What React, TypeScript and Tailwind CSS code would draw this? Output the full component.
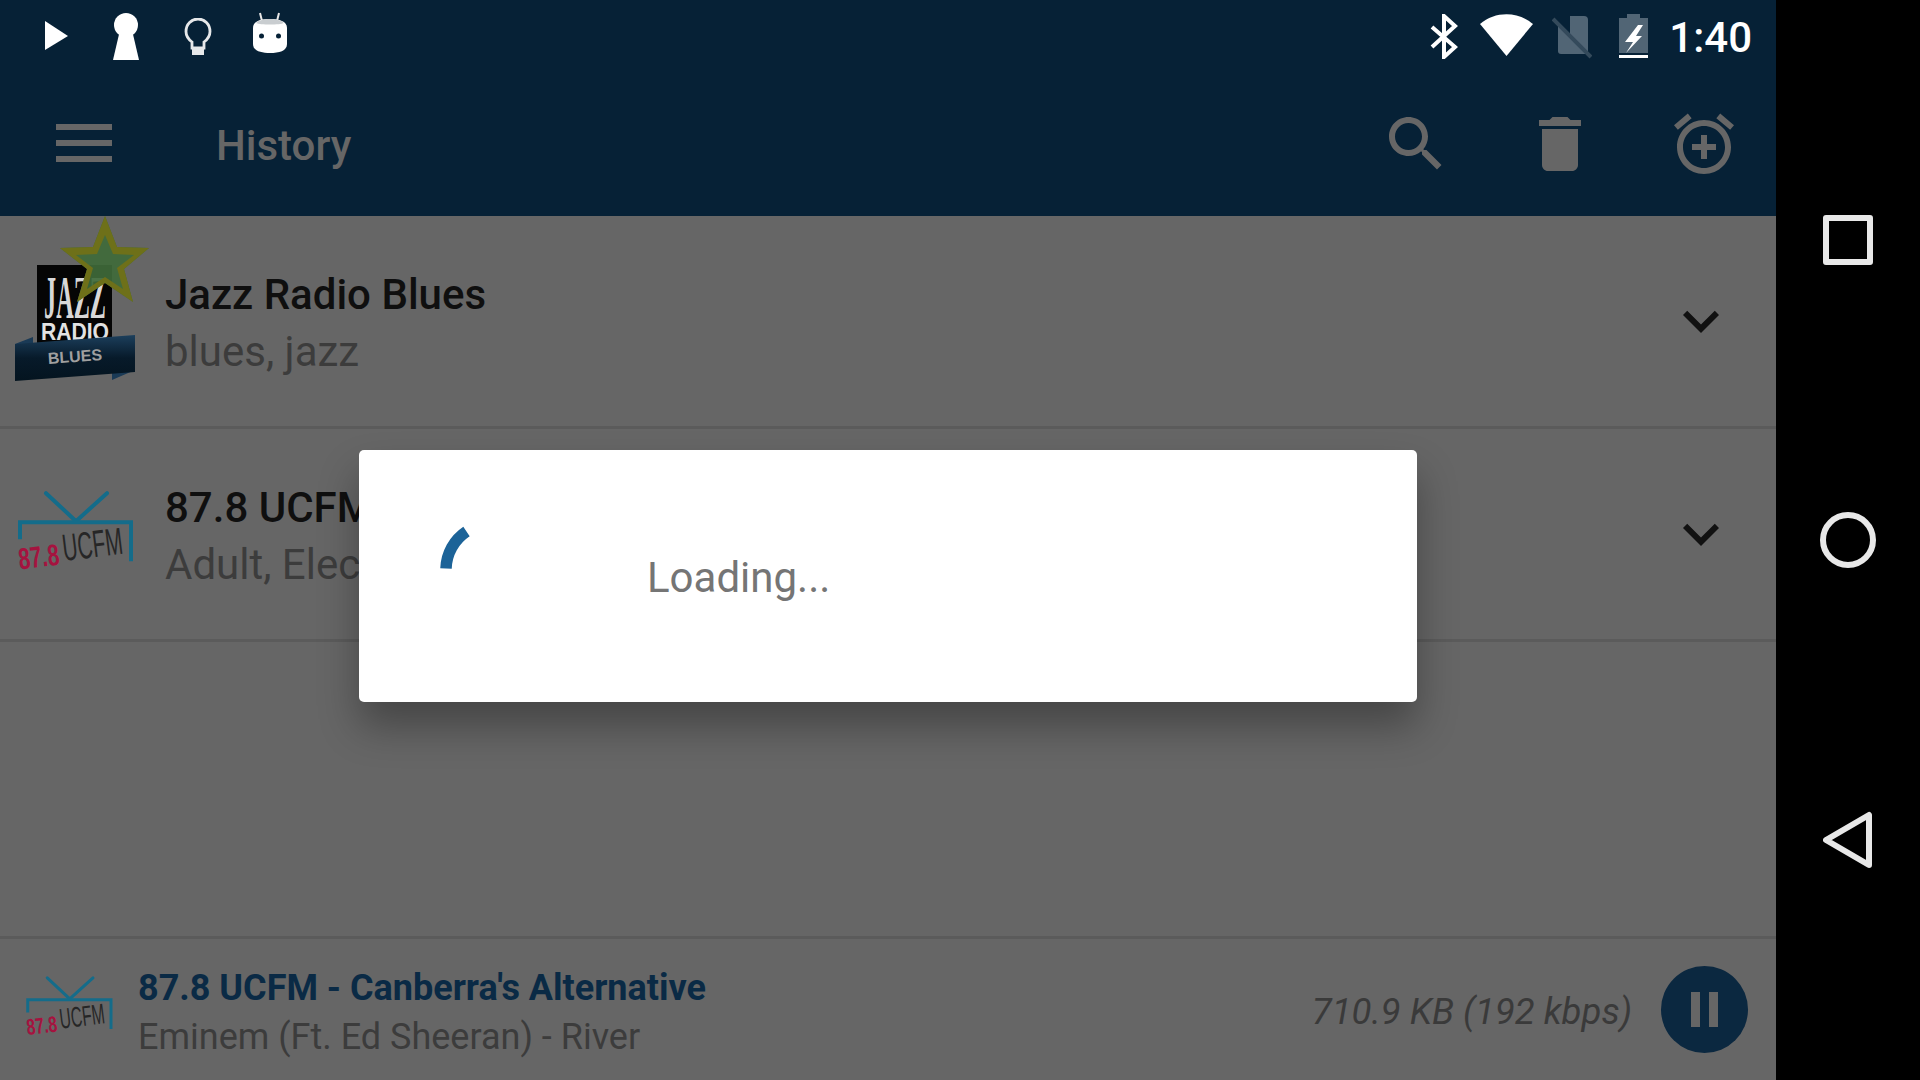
const ROBOTO = "font-['Roboto',sans-serif]";

function JazzLogo() {
  return (
    <svg width="136" height="170" viewBox="14 216 136 170" className="shrink-0">
      <defs>
        <linearGradient id="rib" x1="0" y1="0" x2="0" y2="1">
          <stop offset="0" stopColor="#1c3f5c" />
          <stop offset="0.5" stopColor="#071a2a" />
          <stop offset="1" stopColor="#04141f" />
        </linearGradient>
      </defs>
      <rect x="37" y="265" width="75" height="82" fill="#050505" />
      <text transform="translate(75 318) scale(0.39 1)" fontFamily="Liberation Serif" fontSize="62" fontWeight="700" fill="#d8d8d8" textAnchor="middle">JAZZ</text>
      <text transform="translate(75 340) scale(0.92 1)" fontFamily="Liberation Sans" fontSize="23" fontWeight="700" fill="#e2e2e2" textAnchor="middle">RADIO</text>
      <polygon points="15,344 33,337 33,350" fill="#1a3a56" />
      <polygon points="112,372 135,370 135,370 112,380" fill="#1a3a56" />
      <polygon points="15,344 135,335 135,372 15,381" fill="url(#rib)" />
      <text x="75" y="362" fontFamily="Liberation Sans" fontSize="16" fontWeight="700" fill="#a0a0a0" textAnchor="middle" transform="rotate(-4 75 358)">BLUES</text>
      <polygon points="105,216 117,247 149,248 124,269 133,302 105,283 77,302 87,269 60,248 93,247" fill="#3f6a3a" fillOpacity="0.92" />
      <path d="M105 216 117 247 149 248 124 269 133 302 105 283 77 302 87 269 60 248 93 247ZM105 235 97 254 76 255 93 268 87 289 105 277 123 289 117 268 134 255 113 254Z" fill="#6e7019" fillRule="evenodd" />
    </svg>
  );
}

function UcfmLogo({ width }: { width: number }) {
  return (
    <svg width={width} height={width * 0.72} viewBox="15 488 120 86" className="shrink-0 overflow-visible">
      <path d="M46 493 76 521 107 493" fill="none" stroke="#146c8a" strokeWidth="4" strokeLinecap="round" />
      <path d="M20 539V522H131V561" fill="none" stroke="#146c8a" strokeWidth="4" />
      <g transform="rotate(-7 70 552)">
        <text transform="translate(18 563) scale(0.7 1)" fontFamily="Liberation Sans" fontSize="30" fontWeight="700" fill="#a5133f">87.8</text>
        <text transform="translate(63 560) scale(0.55 1)" fontFamily="Liberation Sans" fontSize="38" fill="#262626">UCFM</text>
      </g>
    </svg>
  );
}

function Chevron() {
  return (
    <svg width="72" height="72" viewBox="0 0 24 24" fill="#111111" className="shrink-0">
      <path d="M16.59 8.59L12 13.17 7.41 8.59 6 10l6 6 6-6z" />
    </svg>
  );
}

function StationRow({ logo, title, sub }: { logo: React.ReactNode; title: string; sub: string }) {
  return (
    <div className="relative flex h-[213px] items-center border-b-[3px] border-[#5b5b5b] pl-[165px] pr-[39px]">
      <div className="absolute left-[14px] top-0">{logo}</div>
      <div className="flex min-w-0 flex-1 flex-col pt-[3px]">
        <div className="text-[42px] leading-[57px] font-medium text-[#0f0f0f] whitespace-nowrap">{title}</div>
        <div className="text-[42px] leading-[57px] text-[#3c3c3c] whitespace-nowrap">{sub}</div>
      </div>
      <Chevron />
    </div>
  );
}

export default function App() {
  return (
    <div className={`${ROBOTO} flex h-[1080px] w-[1920px] overflow-hidden bg-black`}>
      <div className="relative flex w-[1776px] flex-col bg-[#666666]">
        {/* status bar */}
        <div className="flex h-[72px] items-start bg-[#062136] pr-[24px]">
          <svg width="23" height="29" viewBox="45 21 23 29" className="ml-[45px] mt-[21px]">
            <polygon points="45,21 68,36 45,50" fill="#fff" />
          </svg>
          <svg width="26" height="48" viewBox="113 12 26 48" className="ml-[45px] mt-[12px]">
            <circle cx="126" cy="25" r="12" fill="#fff" />
            <polygon points="120,30 132,30 139,60 113,60" fill="#fff" />
          </svg>
          <svg width="28" height="38" viewBox="184 18 28 38" className="ml-[45px] mt-[18px]">
            <path d="M192 48V42C188 39 186 36 186 31.500 186 24 191.500 19 198 19S210 24 210 31.500C210 36 208 39 204 42V48Z" fill="none" stroke="#e6e8ea" strokeWidth="2.800" />
            <rect x="192" y="49" width="12" height="6" fill="#e6e8ea" />
          </svg>
          <svg width="36" height="42" viewBox="252 12 36 42" className="ml-[40px] mt-[12px]">
            <path d="M260 13 262 21M279 13 277 21" stroke="#e8e8e8" strokeWidth="2" />
            <path d="M253 28C253 21 261 19 270 19S287 21 287 28V44C287 51 279 53 270 53S253 51 253 44Z" fill="#fff" />
            <path d="M256 23C259 20 264 19 270 19S281 20 284 23C280 25 260 25 256 23Z" fill="#c9cdd0" />
            <circle cx="261.500" cy="36" r="2.500" fill="#062136" />
            <circle cx="278.500" cy="36" r="2.500" fill="#062136" />
          </svg>
          <div className="flex-1" />
          <svg width="28" height="45" viewBox="1431 14 28 45" className="ml-[1px] mt-[14px]">
            <path d="M1433 27 1456 47 1445 57V16L1456 26 1433 47" fill="none" stroke="#fff" strokeWidth="4" />
          </svg>
          <svg width="54" height="44" viewBox="1481 13 54 44" className="ml-[22px] mt-[13px]">
            <path d="M1507.500 56 1481 24C1496 11 1519 11 1534 24Z" fill="#fff" />
          </svg>
          <svg width="40" height="43" viewBox="1552 16 40 43" className="ml-[18px] mt-[16px]">
            <path d="M1558 20Q1558 16 1562 16H1584Q1588 16 1588 20V51Q1588 54 1585 54H1561Q1558 54 1558 51Z" fill="#516575" />
            <path d="M1552 17 1570 35V16H1552Z" fill="#062136" />
            <path d="M1552 26 1558 32V16H1552Z" fill="#062136" />
            <path d="M1553 19 1591 57" stroke="#344a5b" strokeWidth="4" />
          </svg>
          <svg width="30" height="45" viewBox="1619 14 30 45" className="ml-[27px] mt-[14px]">
            <path d="M1627 14H1640V18H1648V53H1619V18H1627Z" fill="#516575" />
            <rect x="1619" y="55" width="29" height="3" fill="#fff" />
            <path d="M1638 25 1625 42H1633L1626 53 1642 36H1636L1643 25Z" fill="#fff" />
          </svg>
          <div className="ml-[20px] mt-[13px] text-[42px] leading-[50px] font-medium text-white">1:40</div>
        </div>
        {/* toolbar */}
        <div className="flex h-[144px] items-center bg-[#062136] pl-[48px] pr-[36px]">
          <svg width="72" height="72" viewBox="0 0 72 72" fill="#666666" className="shrink-0">
            <rect x="8" y="16" width="56" height="6" />
            <rect x="8" y="32" width="56" height="6" />
            <rect x="8" y="48" width="56" height="6" />
          </svg>
          <div className="ml-[96px] flex-1 pt-[3px] text-[42px] font-medium text-[#666666]">History</div>
          <div className="flex gap-[72px]">
            <svg width="72" height="72" viewBox="0 0 24 24" fill="#666666">
              <path d="M15.5 14h-.79l-.28-.27C15.41 12.59 16 11.11 16 9.5 16 5.91 13.09 3 9.5 3S3 5.91 3 9.5 5.91 16 9.5 16c1.61 0 3.09-.59 4.23-1.57l.27.28v.79l5 4.99L20.49 19l-4.99-5zm-6 0C7.01 14 5 11.99 5 9.5S7.01 5 9.5 5 14 7.01 14 9.5 11.99 14 9.5 14z" />
            </svg>
            <svg width="72" height="72" viewBox="0 0 24 24" fill="#666666">
              <path d="M6 19c0 1.1.9 2 2 2h8c1.100 0 2-.9 2-2V7H6v12zM19 4h-3.500l-1-1h-5l-1 1H5v2h14V4z" />
            </svg>
            <svg width="72" height="72" viewBox="0 0 24 24" fill="#666666">
              <path d="M7.880 3.390L6.600 1.860 2 5.710l1.290 1.530 4.590-3.850zM22 5.720l-4.600-3.860-1.290 1.530 4.600 3.860L22 5.720zM12 4c-4.970 0-9 4.030-9 9s4.030 9 9 9 9-4.030 9-9-4.030-9-9-9zm0 16c-3.860 0-7-3.140-7-7s3.140-7 7-7 7 3.140 7 7-3.140 7-7 7zm1-11h-2v3H8v2h3v3h2v-3h3v-2h-3V9z" />
            </svg>
          </div>
        </div>
        {/* list */}
        <div className="flex-1">
          <StationRow logo={<JazzLogo />} title="Jazz Radio Blues" sub="blues, jazz" />
          <StationRow
            logo={<div className="ml-[1px] mt-[59px]"><UcfmLogo width={120} /></div>}
            title="87.8 UCFM - Canberra's Alternative"
            sub="Adult, Electronic"
          />
        </div>
        {/* now playing */}
        <div className="flex h-[144px] items-center border-t-[3px] border-[#5b5b5b] pl-[24px] pr-[28px]">
          <div className="mb-[6px]"><UcfmLogo width={90} /></div>
          <div className="ml-[24px] flex flex-col pt-[7px]">
            <div className="text-[36px] leading-[49px] font-bold text-[#0a2a45] whitespace-nowrap">87.8 UCFM - Canberra's Alternative</div>
            <div className="text-[36px] leading-[49px] text-[#3c3c3c] whitespace-nowrap">Eminem (Ft. Ed Sheeran) - River</div>
          </div>
          <div className="flex-1" />
          <div className="mr-[29px] pt-[5px] text-[36.5px] italic text-[#3a3a3a] whitespace-nowrap">710.9 KB (192 kbps)</div>
          <div className="flex h-[87px] w-[87px] items-center justify-center gap-[9px] rounded-full bg-[#0b2840]">
            <div className="h-[35px] w-[9px] bg-[#666666]" />
            <div className="h-[35px] w-[9px] bg-[#666666]" />
          </div>
        </div>
        {/* dialog */}
        <div className="absolute inset-x-0 bottom-0 top-[72px] flex items-center justify-center">
          <div className="flex h-[252px] w-[1058px] items-center rounded-[5px] bg-white pl-[73px] shadow-[0_24px_40px_rgba(0,0,0,0.32)]">
            <svg width="120" height="120" viewBox="0 0 120 120" className="mb-[12px] shrink-0">
              <path d="M34.500 21.500A46 46 0 0 0 14 58.500" fill="none" stroke="#1c6398" strokeWidth="11.500" />
            </svg>
            <div className="ml-[95px] mt-[3px] text-[42px] text-[#757575]">Loading...</div>
          </div>
        </div>
      </div>
      {/* nav bar */}
      <div className="flex w-[144px] flex-col items-center pt-[215px]">
        <div className="h-[50px] w-[50px] rounded-[3px] border-[6px] border-[#e8e8e8]" />
        <div className="mt-[247px] h-[56px] w-[56px] rounded-full border-[6px] border-[#e8e8e8]" />
        <svg width="50" height="58" viewBox="0 0 50 58" className="mt-[243px]">
          <path d="M3 29 46 4V54Z" fill="none" stroke="#e8e8e8" strokeWidth="6" strokeLinejoin="round" />
        </svg>
      </div>
    </div>
  );
}
